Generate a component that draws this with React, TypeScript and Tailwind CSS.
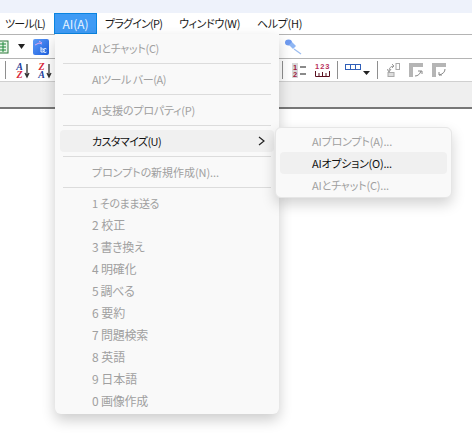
function Sep() {
  return <div className="mx-[8px] my-[4px] h-px bg-[#dcdcdc]" />;
}

function Item({ label, size, active, sub }: { label: string; size: string; active?: boolean; sub?: boolean }) {
  return (
    <div className={`mx-[5px] flex h-[22px] items-center justify-between rounded-[4px] pl-[32px] pr-[8px] ${active ? "bg-[#f0f0f0] text-[#111]" : "text-[#a0a0a0]"}`}>
      <span className={size}>{label}</span>
      {sub && (
        <svg width="8" height="10" viewBox="0 0 8 10"><path d="M1 1l5 4-5 4" fill="none" stroke="#222" strokeWidth="1.2" /></svg>
      )}
    </div>
  );
}

function VBar() {
  return <div className="h-[18px] w-px bg-[#8f8f8f]" />;
}

function SortIcon({ top, bottom, topColor, bottomColor }: { top: string; bottom: string; topColor: string; bottomColor: string }) {
  return (
    <svg className="overflow-visible" width="14" height="15" viewBox="0 0 14 15">
      <text x="3.500" y="7" textAnchor="middle" fontSize="10" fontWeight="700" fontStyle="italic" fontFamily='"Liberation Serif", serif' fill={topColor}>{top}</text>
      <text x="3.500" y="15" textAnchor="middle" fontSize="10" fontWeight="700" fontStyle="italic" fontFamily='"Liberation Serif", serif' fill={bottomColor}>{bottom}</text>
      <path d="M11 1v12M9 10l2 4 2-4" fill="none" stroke="#333" strokeWidth="1.3" />
    </svg>
  );
}

export default function App() {
  return (
    <div className="relative h-[437px] w-[472px] overflow-hidden bg-white text-[12px] [font-feature-settings:'palt']" style={{ fontFamily: '"Noto Sans CJK JP", sans-serif' }}>
      <div className="h-[13px] bg-[#eef2fb]" />
      <div className="flex h-[21px] items-center whitespace-nowrap bg-white pl-[5px] text-[#1a1a1a]">
        <span className="w-[49px] text-[11px] tracking-[-0.77px]">ツール(L)</span>
        <span className="flex h-[21px] w-[43px] items-center justify-center border border-[#0a84e0] bg-[#3f9bf5] text-[#e8f3ff]">AI(A)</span>
        <span className="ml-[8px] w-[74px] text-[11px] tracking-[-0.8px]">プラグイン(P)</span>
        <span className="w-[78px] text-[11px] tracking-[-0.36px]">ウィンドウ(W)</span>
        <span className="text-[11px] tracking-[-0.33px]">ヘルプ(H)</span>
      </div>
      <div className="flex h-[25px] items-center border-y border-y-[#b4b4b4] bg-white">
        <svg width="9" height="14" viewBox="0 0 9 14">
          <rect x="-2" y="1" width="10" height="12" fill="#e8f5e8" stroke="#2d7a3a" />
          <path d="M0 4h6M0 7h6M0 10h6M3 2v10" stroke="#1f8a3a" />
        </svg>
        <svg className="ml-[9px]" width="7" height="5" viewBox="0 0 7 5"><path d="M0 0h7L3.500 5z" fill="#222" /></svg>
        <svg className="ml-[8px]" width="16" height="16" viewBox="0 0 16 16">
          <defs>
            <linearGradient id="g" x1="0" y1="0" x2="1" y2="1"><stop offset="0" stopColor="#5f9cf7" /><stop offset="1" stopColor="#1c5fe0" /></linearGradient>
          </defs>
          <rect width="16" height="16" rx="2" fill="url(#g)" />
          <path d="M2 6l4-2 3 1M6 2l3 2" stroke="#e3a8e8" fill="none" />
          <path d="M8 8v5h2a1.300 1.300 0 000-3H8M13.500 13a2 2 0 110-3" stroke="#e6f0ff" fill="none" />
        </svg>
        <svg className="ml-[236px]" width="17" height="16" viewBox="0 0 17 16">
          <ellipse cx="3.500" cy="3.500" rx="3.500" ry="3" fill="#6f9bf0" />
          <path d="M4 6l3-3 4 4-3 3z" fill="#8fb6f3" />
          <path d="M9 10l7 5" stroke="#9cbdf0" strokeWidth="1.2" />
        </svg>
      </div>
      <div className="flex h-[23px] items-center border-b border-b-[#d0d0d0] bg-white">
        <div className="flex w-[282px] items-center">
          <div className="ml-[5px]"><VBar /></div>
          <div className="ml-[10px]"><SortIcon top="A" bottom="Z" topColor="#1f3f9a" bottomColor="#d8263a" /></div>
          <div className="ml-[8px]"><SortIcon top="Z" bottom="A" topColor="#d8263a" bottomColor="#1f3f9a" /></div>
        </div>
        <VBar />
        <svg className="ml-[9px] overflow-visible" width="14" height="15" viewBox="0 0 14 15">
          <rect width="6" height="15" fill="#d8d8d8" />
          <text x="3" y="7" textAnchor="middle" fontSize="7.500" fontWeight="700" fontFamily='"Liberation Sans", sans-serif' fill="#a02040">1</text>
          <text x="3" y="14" textAnchor="middle" fontSize="7.500" fontWeight="700" fontFamily='"Liberation Sans", sans-serif' fill="#a02040">2</text>
          <path d="M8 4h6M8 11h6" stroke="#8a8a8a" strokeWidth="2" />
        </svg>
        <svg className="ml-[9px] overflow-visible" width="15" height="14" viewBox="0 0 15 14">
          <text x="0" y="6" fontSize="7.500" fontWeight="700" letterSpacing="1" fontFamily='"Liberation Sans", sans-serif' fill="#b8305a">123</text>
          <path d="M.5 8v5.500h14V8M4 10v3M7.500 9v4M11 10v3" fill="none" stroke="#5a1020" />
        </svg>
        <div className="ml-[7px]"><VBar /></div>
        <svg className="ml-[7px]" width="25" height="13" viewBox="0 0 25 13">
          <rect x=".5" y=".5" width="15" height="5" fill="#fff" stroke="#2f5fb8" />
          <path d="M5.500 1v4M10.500 1v4" stroke="#2f5fb8" />
          <path d="M18 7h7l-3.500 4z" fill="#222" />
        </svg>
        <div className="ml-[7px]"><VBar /></div>
        <svg className="ml-[9px]" width="13" height="14" viewBox="0 0 13 14">
          <rect x="9" y=".5" width="3.500" height="6" fill="#fff" stroke="#aaa" />
          <rect x="1" y="9.500" width="6" height="4" fill="#ddd" stroke="#aaa" />
          <path d="M2 8c0-3 2-5 5-5M0 6l2 3 2-3M5 1l2 2-2 2" fill="none" stroke="#999" />
        </svg>
        <svg className="ml-[9px]" width="15" height="15" viewBox="0 0 15 15">
          <rect x="0" y="0" width="14" height="4" fill="#b5b5b5" />
          <rect x="0" y="4" width="4" height="10" fill="#b5b5b5" />
          <path d="M6 13c3 0 5-2 6-5M9 8h4v3" fill="none" stroke="#888" />
        </svg>
        <svg className="ml-[8px]" width="15" height="15" viewBox="0 0 15 15">
          <rect x="0" y="0" width="14" height="4" fill="#b5b5b5" />
          <rect x="0" y="4" width="4" height="10" fill="#b5b5b5" />
          <path d="M13 6c0 3-2 5-6 6M7 9v3h3" fill="none" stroke="#888" />
        </svg>
      </div>
      <div className="h-[27px] border-b-2 border-b-[#777] bg-[#efefef]" />

      <div className="absolute left-[55px] top-[34px] h-[380px] w-[224px] rounded-b-[6px] bg-[#f9f9f9] pt-[3px] shadow-[0_6px_14px_rgba(0,0,0,0.2)]">
        <Item label="AIとチャット(C)" size="text-[11px] tracking-[-0.31px]" />
        <Sep />
        <Item label="AIツール バー(A)" size="text-[11px] tracking-[-0.45px]" />
        <Sep />
        <Item label="AI支援のプロパティ(P)" size="text-[11px] tracking-[-0.22px]" />
        <Sep />
        <Item label="カスタマイズ(U)" size="text-[11px] tracking-[-0.6px]" active sub />
        <Sep />
        <Item label="プロンプトの新規作成(N)..." size="text-[11px] tracking-[-0.06px]" />
        <Sep />
        <Item label="1 そのまま送る" size="text-[11px] tracking-[-0.4px]" />
        <Item label="2 校正" size="text-[12px]" />
        <Item label="3 書き換え" size="text-[12px] tracking-[-0.4px]" />
        <Item label="4 明確化" size="text-[12px] tracking-[-0.2px]" />
        <Item label="5 調べる" size="text-[12px] tracking-[-0.4px]" />
        <Item label="6 要約" size="text-[12px]" />
        <Item label="7 問題検索" size="text-[12px] tracking-[-0.2px]" />
        <Item label="8 英語" size="text-[12px]" />
        <Item label="9 日本語" size="text-[12px]" />
        <Item label="0 画像作成" size="text-[12px] tracking-[-0.2px]" />
      </div>

      <div className="absolute left-[275px] top-[127px] h-[71px] w-[177px] rounded-[6px] border border-[#e6e6e6] bg-[#f9f9f9] pt-[2px] shadow-[0_6px_14px_rgba(0,0,0,0.18)]">
        <div className="flex h-[22px] items-center pl-[36px] text-[11px] tracking-[-0.15px] text-[#a0a0a0]">AIプロンプト(A)...</div>
        <div className="mx-[4px] flex h-[22px] items-center rounded-[4px] bg-[#f0f0f0] pl-[32px] text-[11px] tracking-[-0.25px] text-[#111]">AIオプション(O)...</div>
        <div className="flex h-[22px] items-center pl-[36px] text-[11px] tracking-[-0.18px] text-[#a0a0a0]">AIとチャット(C)...</div>
      </div>
    </div>
  );
}
